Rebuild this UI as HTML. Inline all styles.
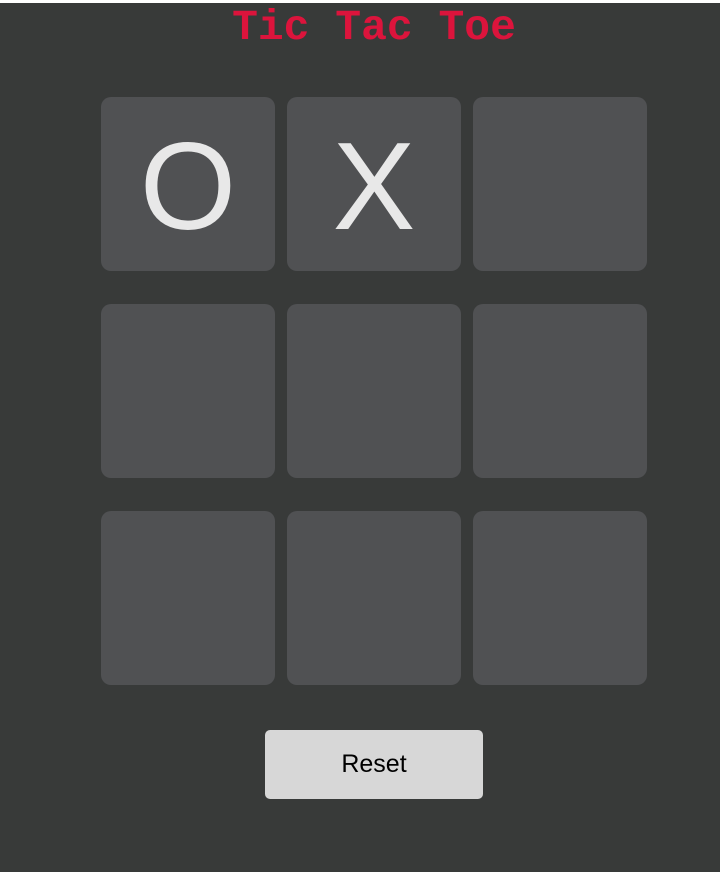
<!DOCTYPE html>
<html><head><style>
html,body{margin:0;padding:0;background:#fff;}
#bg{position:absolute;left:0;top:3px;width:720px;height:869px;background:#383a39;}
h1{position:absolute;left:0;top:5px;width:748px;margin:0;text-align:center;font-family:"Liberation Mono",monospace;font-weight:bold;color:#dc143c;font-size:43px;line-height:46px;}
.c{position:absolute;width:174px;height:174px;background:#505153;border-radius:10px;color:#e8e8e8;font-family:"Liberation Sans",sans-serif;font-size:124px;line-height:180px;text-align:center;}
#r{position:absolute;left:265px;top:730px;width:218px;height:69px;background:#d7d7d7;border-radius:5px;font-family:"Liberation Sans",sans-serif;font-size:25px;line-height:68px;text-align:center;color:#000;}
</style></head><body>
<div id="bg"></div>
<h1>Tic Tac Toe</h1>
<div class="c" style="left:101px;top:97px">O</div>
<div class="c" style="left:287px;top:97px">X</div>
<div class="c" style="left:473px;top:97px"></div>
<div class="c" style="left:101px;top:304px"></div>
<div class="c" style="left:287px;top:304px"></div>
<div class="c" style="left:473px;top:304px"></div>
<div class="c" style="left:101px;top:511px"></div>
<div class="c" style="left:287px;top:511px"></div>
<div class="c" style="left:473px;top:511px"></div>
<div id="r">Reset</div>
</body></html>
